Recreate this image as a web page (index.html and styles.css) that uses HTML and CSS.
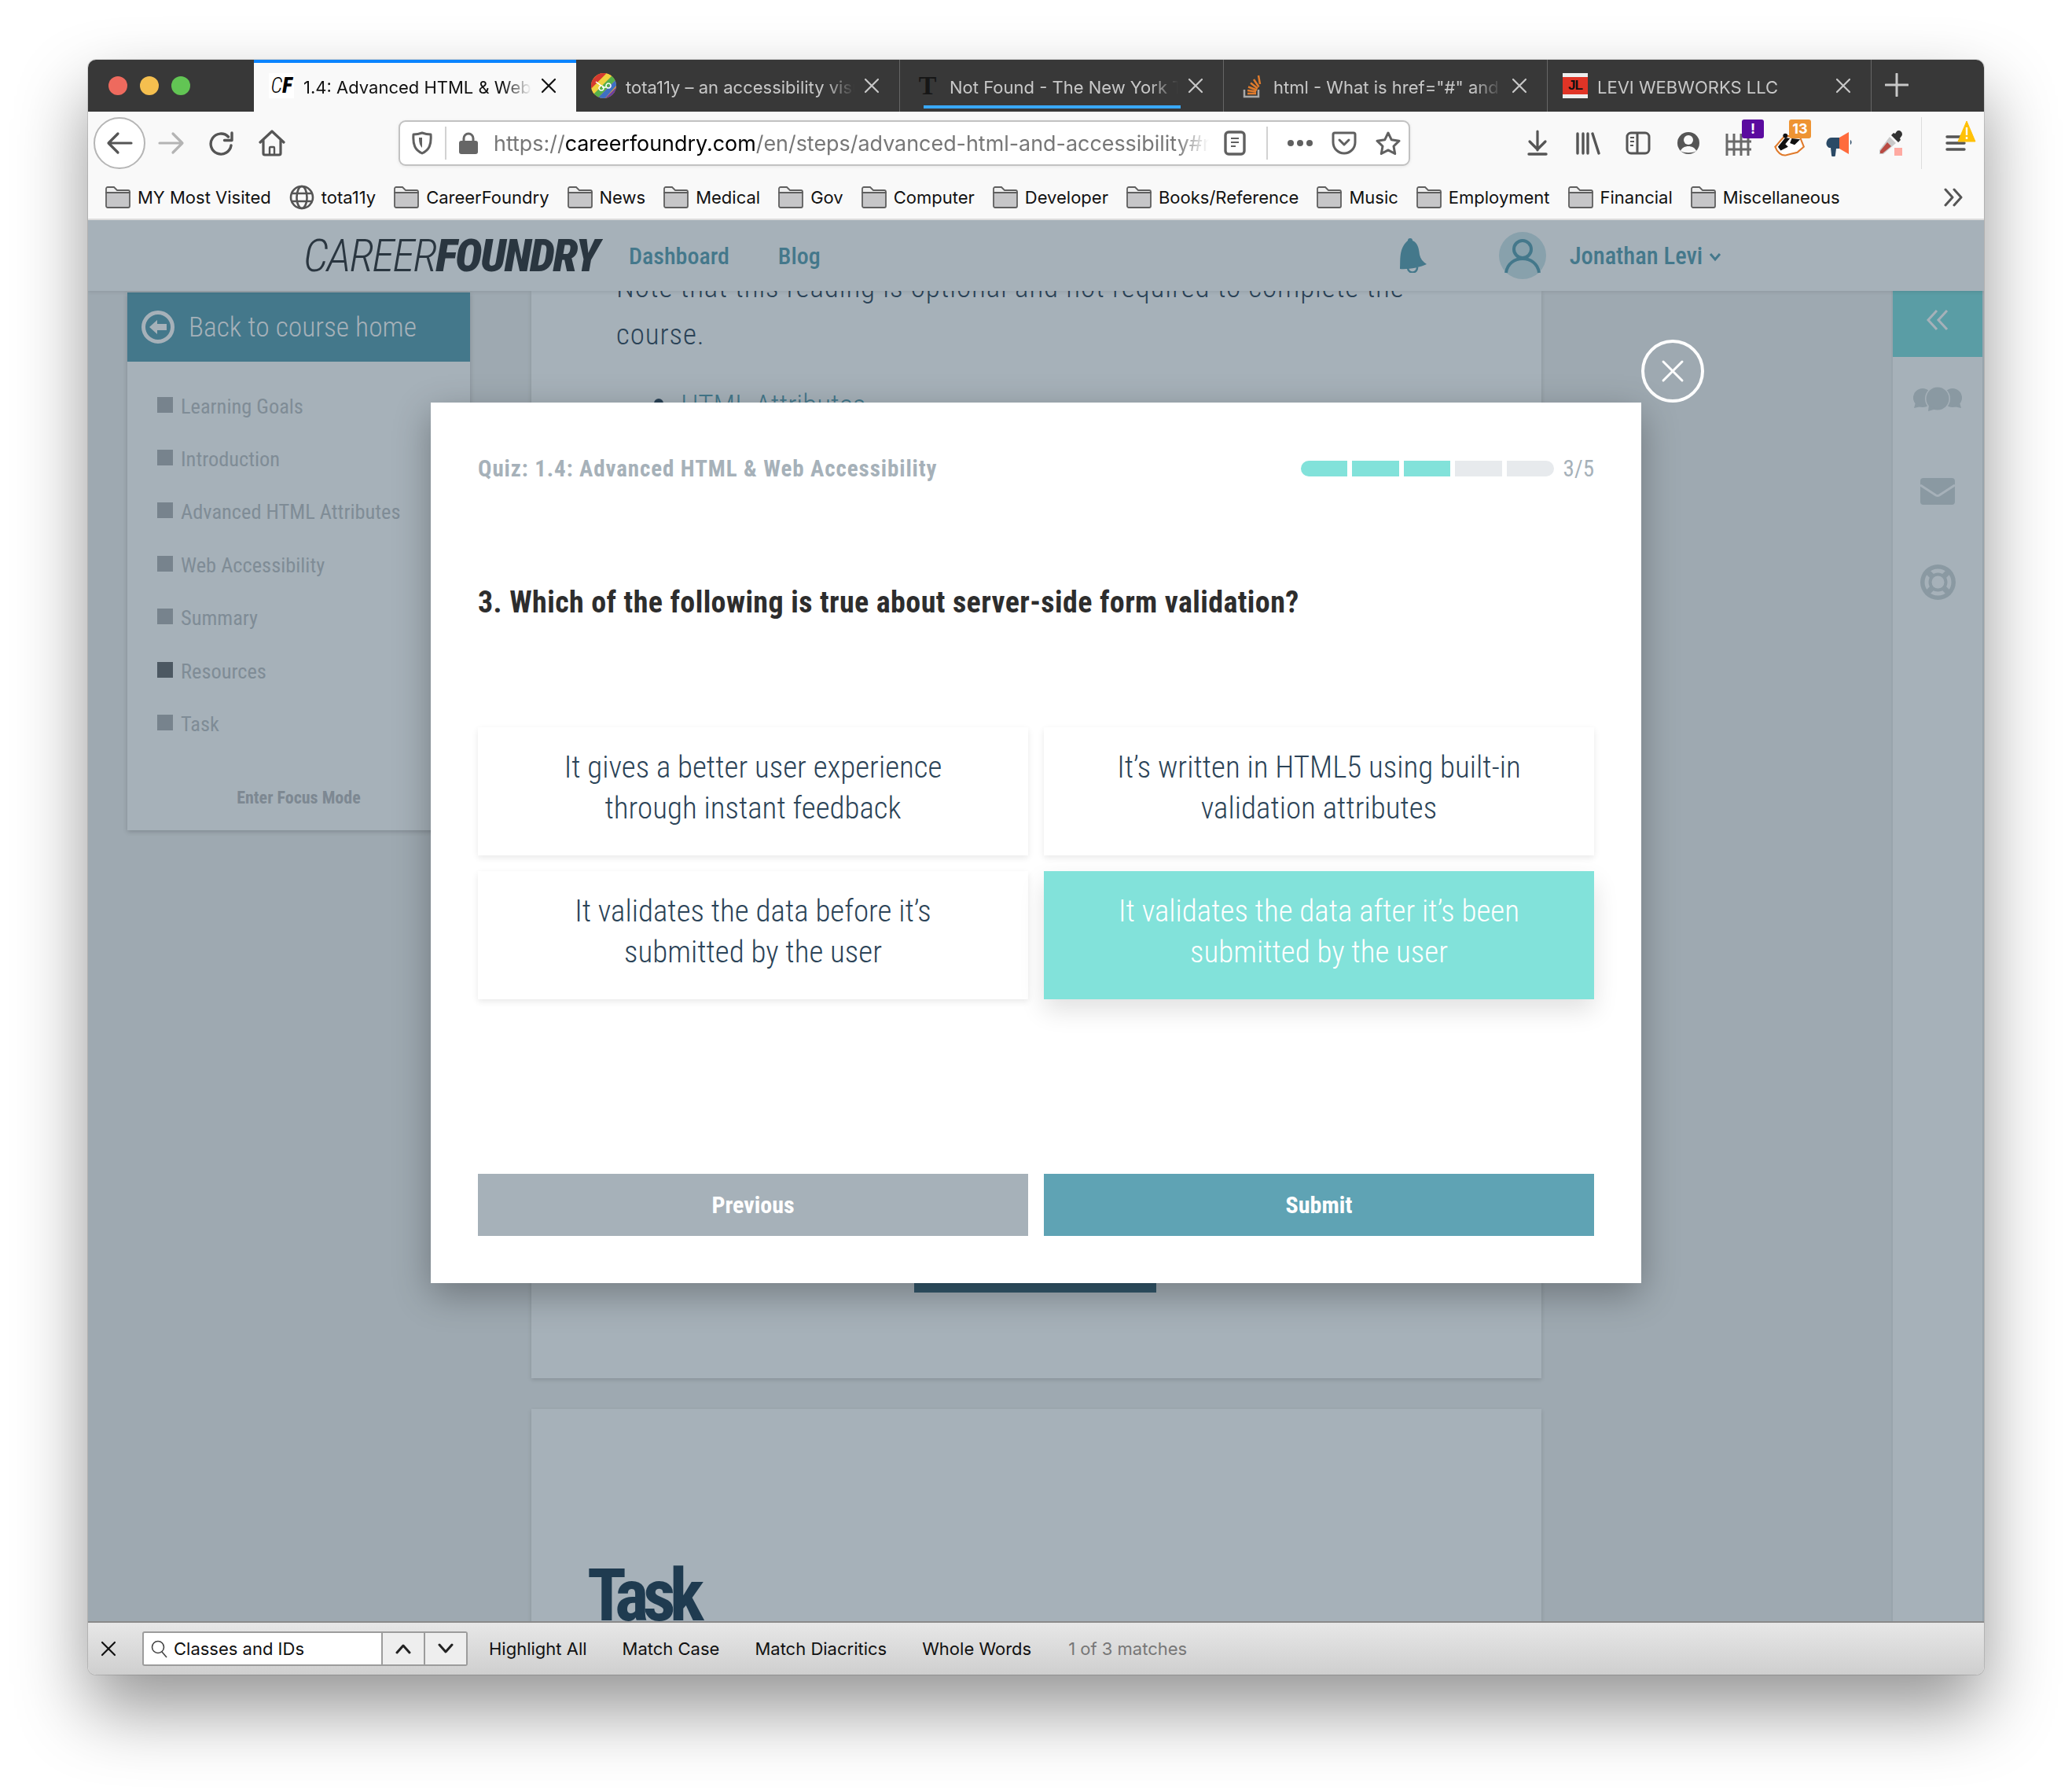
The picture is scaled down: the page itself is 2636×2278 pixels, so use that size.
FILE: index.html
```html
<!DOCTYPE html>
<html lang="en">
<head>
  <meta charset="UTF-8">
  <meta name="viewport" content="width=device-width, initial-scale=1.0">
  <title>1.4: Advanced HTML &amp; Web Accessibility</title>
  <link rel="stylesheet" href="styles.css">
</head>
<body>
  <svg class="sprite" width="0" height="0">
    <symbol id="i-folder" viewBox="0 0 32 28">
      <path d="M1 8V3a2 2 0 0 1 2-2h8l4 4h14a2 2 0 0 1 2 2v1z" fill="#efefef" stroke="#5f5f5f" stroke-width="1.800"/>
      <path d="M1 8h30v17a2 2 0 0 1-2 2H3a2 2 0 0 1-2-2z" fill="#c6c6c8" stroke="#5f5f5f" stroke-width="1.800"/>
    </symbol>
    <symbol id="i-x" viewBox="0 0 20 20">
      <path d="M2 2l16 16M18 2L2 18" fill="none" stroke="currentColor" stroke-width="2.200" stroke-linecap="round"/>
    </symbol>
  </svg>

  <div class="window">
    <div class="tabstrip">
      <div class="lights">
        <span class="light light-red"></span>
        <span class="light light-yellow"></span>
        <span class="light light-green"></span>
      </div>

      <div class="tab tab-active">
        <span class="favicon fav-cf"><i>C</i>F</span>
        <span class="tab-title">1.4: Advanced HTML &amp; Web Accessibility</span>
        <svg class="tab-x"><use href="#i-x"/></svg>
      </div>
      <div class="tab">
        <svg class="favicon" viewBox="0 0 32 32">
          <clipPath id="round"><circle cx="16" cy="16" r="16"/></clipPath>
          <g clip-path="url(#round)">
            <path d="M0 0h32v32H0z" fill="#e8a23a"/>
            <path d="M-4 14L16-6l6 4L-2 22z" fill="#d5392f"/>
            <path d="M-2 22L22-2l5 5L3 27z" fill="#efd23f"/>
            <path d="M3 27L27 3l5 5L8 32z" fill="#55b04a"/>
            <path d="M8 32L32 8v8L16 34z" fill="#3f6fc4"/>
            <path d="M16 34l18-18v18z" fill="#6a3fa0"/>
          </g>
          <path d="M6 11l7 5M14 18h5M13 16a3 3 0 1 0 .1 0M22 13a3 3 0 1 0 .1 0" fill="none" stroke="#fff" stroke-width="1.500"/>
        </svg>
        <span class="tab-title">tota11y – an accessibility visualization toolkit</span>
        <svg class="tab-x"><use href="#i-x"/></svg>
      </div>
      <div class="tab">
        <span class="favicon fav-nyt">T</span>
        <span class="tab-title">Not Found - The New York Times</span>
        <svg class="tab-x"><use href="#i-x"/></svg>
        <span class="tab-loading"></span>
      </div>
      <div class="tab">
        <svg class="favicon" viewBox="0 0 32 32">
          <path d="M7 21v9h18v-9" fill="none" stroke="#a8a8a8" stroke-width="2.500"/>
          <path d="M11 26h11M11 22l11 1.500M12 17.500l11 4M15 12.500l9 7M19 8l6.500 9.500M25 3l2 11" fill="none" stroke="#e07b2c" stroke-width="2.500"/>
        </svg>
        <span class="tab-title">html - What is href="#" and why is it used?</span>
        <svg class="tab-x"><use href="#i-x"/></svg>
      </div>
      <div class="tab">
        <span class="favicon fav-jl">JL</span>
        <span class="tab-title">LEVI WEBWORKS LLC</span>
        <svg class="tab-x"><use href="#i-x"/></svg>
      </div>
      <svg class="new-tab" viewBox="0 0 30 30"><path d="M15 1v28M1 15h28" stroke="#c8c8c8" stroke-width="3" stroke-linecap="round"/></svg>
    </div>

    <div class="toolbar">
      <div class="back-btn">
        <svg class="icon" viewBox="0 0 34 34"><path d="M32 17H4M15 5L3 17l12 12" fill="none" stroke="#555" stroke-width="3.200" stroke-linecap="round" stroke-linejoin="round"/></svg>
      </div>
      <div class="nav-btns">
        <svg class="icon" viewBox="0 0 34 34"><path d="M2 17h28M19 5l12 12-12 12" fill="none" stroke="#b4b4b4" stroke-width="3.200" stroke-linecap="round" stroke-linejoin="round"/></svg>
        <svg class="icon" viewBox="0 0 34 34"><path d="M29 20a13 13 0 1 1-3.500-11M30 4v9.500H20.500" fill="none" stroke="#555" stroke-width="3.400" stroke-linecap="round" stroke-linejoin="round"/></svg>
        <svg class="icon" viewBox="0 0 34 34"><path d="M2 16L17 2l15 14M6 13v17a2 2 0 0 0 2 2h18a2 2 0 0 0 2-2V13" fill="none" stroke="#555" stroke-width="3.200" stroke-linecap="round" stroke-linejoin="round"/><path d="M14 31v-8a1 1 0 0 1 1-1h4a1 1 0 0 1 1 1v8" fill="none" stroke="#555" stroke-width="2.400"/></svg>
      </div>

      <div class="urlbar">
        <svg class="url-shield" viewBox="0 0 26 30"><path d="M13 2c4 1.500 7 2 11 2 1 13-2 20-11 24C4 24 1 17 2 4c4 0 7-.500 11-2z" fill="none" stroke="#606060" stroke-width="3" stroke-linejoin="round"/><path d="M13 8h-4c0 6 1 10 4 13z" fill="#606060"/></svg>
        <span class="url-sep"></span>
        <svg class="url-lock" viewBox="0 0 24 28"><path d="M6 13V8a6 6 0 0 1 12 0v5" fill="none" stroke="#666" stroke-width="3"/><rect y="11" width="24" height="17" rx="3" fill="#666"/></svg>
        <span class="url-text">https://<b>careerfoundry.com</b>/en/steps/advanced-html-and-accessibility#responsive</span>
        <svg class="url-icon" viewBox="0 0 28 32"><rect x="2" y="2" width="24" height="28" rx="4" fill="none" stroke="#606060" stroke-width="3.400"/><path d="M9 10h10M9 15h10M9 20h6" stroke="#606060" stroke-width="2.200"/></svg>
        <span class="url-sep url-sep-right"></span>
        <span class="url-dots"><i></i><i></i><i></i></span>
        <svg class="url-icon url-icon-wide" viewBox="0 0 32 30"><path d="M4 2h24a2 2 0 0 1 2 2v10a14 14 0 0 1-28 0V4a2 2 0 0 1 2-2z" fill="none" stroke="#606060" stroke-width="3"/><path d="M10 11l6 6 6-6" fill="none" stroke="#606060" stroke-width="3" stroke-linecap="round" stroke-linejoin="round"/></svg>
        <svg class="url-icon url-icon-wide" viewBox="0 0 32 30"><path d="M16 2l4.300 8.800 9.700 1.400-7 6.800 1.700 9.500-8.700-4.600-8.700 4.600L9 19l-7-6.800 9.700-1.400z" fill="none" stroke="#606060" stroke-width="3" stroke-linejoin="round"/></svg>
      </div>

      <div class="tool-icons">
        <svg class="icon" viewBox="0 0 34 34"><path d="M17 2v24M7 15l10 10 10-10" fill="none" stroke="#555" stroke-width="3.200" stroke-linecap="round" stroke-linejoin="round"/><path d="M6 31h22" stroke="#555" stroke-width="3.400" stroke-linecap="round"/></svg>
        <svg class="icon" viewBox="0 0 34 34"><path d="M4 5v25M11 5v25M17 5v25M23 5l8 25" fill="none" stroke="#555" stroke-width="3.400" stroke-linecap="round"/></svg>
        <svg class="icon" viewBox="0 0 34 34"><rect x="3" y="4" width="28" height="26" rx="5" fill="none" stroke="#555" stroke-width="3"/><path d="M16 4v26" stroke="#555" stroke-width="3"/><path d="M7 10h5M7 15h5M7 20h4" stroke="#555" stroke-width="2.200"/></svg>
        <svg class="icon" viewBox="0 0 34 34"><circle cx="17" cy="17" r="14" fill="#555"/><circle cx="17" cy="13" r="6" fill="#f9f9f9"/><path d="M7 27c3-8 17-8 20 0-4 3-16 3-20 0z" fill="#f9f9f9"/></svg>
        <span class="ext">
          <svg class="icon" viewBox="0 0 34 34"><path d="M2 5v28M11 5v28M20 5v28M29 5v28M1 15h32M1 25h32" fill="none" stroke="#6a6a6a" stroke-width="3"/></svg>
          <span class="badge badge-purple">!</span>
        </span>
        <span class="ext">
          <svg class="icon" viewBox="0 0 34 28"><path d="M2 18C6 14 9 9 13 6l16 2 4 10-7 6-12 3C9 28 4 24 2 18z" fill="#fff" stroke="#e07b2c" stroke-width="1.800"/><path d="M5 18L13 8l5 1-5 6 3 3-8 4zM20 9l9 1-6 6-5-2z" fill="#111"/><circle cx="13" cy="6" r="2.500" fill="#111"/></svg>
          <span class="badge badge-orange">13</span>
        </span>
        <svg class="icon" viewBox="0 0 34 34"><path d="M17 10L29 3v28l-12-7z" fill="#ff6b3d"/><path d="M17 10H8a7 7 0 0 0-4 13l2 0 1 9a2.500 2.500 0 0 0 5 0l1-8h4z" fill="#2b4a66"/><path d="M31 13c2 1 2 5 0 6z" fill="#2b4a66"/></svg>
        <svg class="icon" viewBox="0 0 34 34"><path d="M28 1c3 0 5 2 5 5 0 2-2 3-3 5l1 2-3 3-9-9 3-3 2 1c1-1 2-4 4-4z" fill="#333"/><path d="M17 9l8 8L9 31H4v-5z" fill="#c9c9c9"/><path d="M14 16l5 5L8 30H5v-3z" fill="#b94a42"/><path d="M23 23h10v10H23z" fill="#ffaaa2"/></svg>
      </div>
      <span class="tool-sep"></span>
      <span class="menu-btn">
        <svg class="icon" viewBox="0 0 34 34"><path d="M6 9h22M6 17h22M6 25h22" stroke="#555" stroke-width="3.400" stroke-linecap="round"/></svg>
        <svg class="menu-warn" viewBox="0 0 24 28"><path d="M12 1l11 26H1z" fill="#ffc107" stroke="#ffc107" stroke-linejoin="round"/><path d="M12 9v10M12 21v3" stroke="#fff" stroke-width="2.400"/></svg>
      </span>
    </div>

    <div class="bookmarks">
      <span class="bm"><svg class="folder"><use href="#i-folder"/></svg>MY Most Visited</span>
      <span class="bm"><svg class="globe" viewBox="0 0 32 32"><g fill="none" stroke="#555" stroke-width="2.600"><circle cx="16" cy="16" r="14"/><ellipse cx="16" cy="16" rx="6.500" ry="14"/><path d="M3 11h26M3 21h26"/></g></svg>tota11y</span>
      <span class="bm"><svg class="folder"><use href="#i-folder"/></svg>CareerFoundry</span>
      <span class="bm"><svg class="folder"><use href="#i-folder"/></svg>News</span>
      <span class="bm"><svg class="folder"><use href="#i-folder"/></svg>Medical</span>
      <span class="bm"><svg class="folder"><use href="#i-folder"/></svg>Gov</span>
      <span class="bm"><svg class="folder"><use href="#i-folder"/></svg>Computer</span>
      <span class="bm"><svg class="folder"><use href="#i-folder"/></svg>Developer</span>
      <span class="bm"><svg class="folder"><use href="#i-folder"/></svg>Books/Reference</span>
      <span class="bm"><svg class="folder"><use href="#i-folder"/></svg>Music</span>
      <span class="bm"><svg class="folder"><use href="#i-folder"/></svg>Employment</span>
      <span class="bm"><svg class="folder"><use href="#i-folder"/></svg>Financial</span>
      <span class="bm"><svg class="folder"><use href="#i-folder"/></svg>Miscellaneous</span>
      <svg class="bm-more" viewBox="0 0 26 26"><path d="M3 3l9 10-9 10M14 3l9 10-9 10" fill="none" stroke="#555" stroke-width="3" stroke-linecap="round" stroke-linejoin="round"/></svg>
    </div>

    <div class="page">
      <header class="site-header">
        <div class="logo"><span class="logo-thin">CAREER</span><span class="logo-bold">FOUNDRY</span></div>
        <a class="site-link site-link-dash">Dashboard</a>
        <a class="site-link">Blog</a>
        <svg class="bell" viewBox="0 0 40 44"><path d="M14 3a3 3 0 0 1 6 0c7 3 8 10 9 18 1 5 4 9 9 12-8 4-24 7-34 6 1-10-2-26 10-36z" fill="#44788b"/><path d="M14 38a6 6 0 0 0 12-1" fill="none" stroke="#44788b" stroke-width="2.500"/></svg>
        <div class="avatar">
          <svg viewBox="0 0 60 60"><circle cx="30" cy="22" r="11" fill="none" stroke="#44788b" stroke-width="4"/><path d="M9 52c3-24 39-24 42 0" fill="none" stroke="#44788b" stroke-width="4"/></svg>
        </div>
        <span class="user-name">Jonathan Levi</span>
        <svg class="user-caret" viewBox="0 0 16 12"><path d="M2 2l6 7 6-7" fill="none" stroke="#44788b" stroke-width="3"/></svg>
      </header>

      <div class="page-body">
        <aside class="sidebar">
          <div class="back-home">
            <svg class="back-home-icon" viewBox="0 0 42 42"><circle cx="21" cy="21" r="18.500" fill="none" stroke="#a6b1b9" stroke-width="5"/><path d="M10 21l10-9v5h12v8H20v5z" fill="#a6b1b9"/></svg>
            <span>Back to course home</span>
          </div>
          <ul class="step-list">
            <li>Learning Goals</li>
            <li>Introduction</li>
            <li>Advanced HTML Attributes</li>
            <li>Web Accessibility</li>
            <li>Summary</li>
            <li class="step-current">Resources</li>
            <li>Task</li>
          </ul>
          <div class="focus-mode">Enter Focus Mode</div>
        </aside>

        <main class="content">
          <section class="card card-reading">
            <p class="reading-note">Note that this reading is optional and not required to complete the<br>course.</p>
            <ul class="reading-links">
              <li><a>HTML Attributes</a></li>
            </ul>
            <div class="next-btn"></div>
          </section>
          <section class="card card-task">
            <h2>Task</h2>
          </section>
        </main>

        <nav class="rail">
          <div class="rail-toggle">
            <svg viewBox="0 0 28 28"><path d="M13 2L2 14l11 12M26 2L15 14l11 12" fill="none" stroke="#a6b1b9" stroke-width="3"/></svg>
          </div>
          <svg class="rail-chat" viewBox="0 0 62 32"><circle cx="12" cy="14" r="12" fill="#8a99a2"/><path d="M3 20L1 27l9-2z" fill="#8a99a2"/><circle cx="50" cy="14" r="12" fill="#8a99a2"/><path d="M59 20l2 7-9-2z" fill="#8a99a2"/><circle cx="31" cy="15" r="16" fill="#a6b1b9"/><circle cx="31" cy="15" r="14.500" fill="#8a99a2"/><path d="M20 23l-1 8 10-3z" fill="#8a99a2"/></svg>
          <svg class="rail-mail" viewBox="0 0 44 34"><rect width="44" height="34" rx="4" fill="#8a99a2"/><path d="M0 9l20 13a4 4 0 0 0 4 0L44 9" fill="none" stroke="#a6b1b9" stroke-width="3"/></svg>
          <svg class="rail-buoy" viewBox="0 0 45 45"><circle cx="22.500" cy="22.500" r="22.500" fill="#8a99a2"/><circle cx="22.500" cy="22.500" r="14.500" fill="none" stroke="#a6b1b9" stroke-width="5"/><circle cx="22.500" cy="22.500" r="8" fill="#a6b1b9"/><path d="M15 15L9.500 9.500M30 15l5.500-5.500M15 30l-5.500 5.500M30 30l5.500 5.500" stroke="#8a99a2" stroke-width="7"/></svg>
        </nav>
      </div>

      <div class="quiz-close">
        <svg viewBox="0 0 30 30"><path d="M3 3l24 24M27 3L3 27" stroke="#fff" stroke-width="3" stroke-linecap="round"/></svg>
      </div>

      <div class="quiz">
        <div class="quiz-head">
          <span class="quiz-title">Quiz: 1.4: Advanced HTML &amp; Web Accessibility</span>
          <div class="quiz-progress">
            <div class="progress-bar">
              <span class="seg seg-done"></span>
              <span class="seg seg-done"></span>
              <span class="seg seg-done"></span>
              <span class="seg"></span>
              <span class="seg"></span>
            </div>
            <span class="progress-count">3/5</span>
          </div>
        </div>
        <h3 class="question">3. Which of the following is true about server-side form validation?</h3>
        <div class="options">
          <div class="option">It gives a better user experience<br>through instant feedback</div>
          <div class="option">It’s written in HTML5 using built-in<br>validation attributes</div>
          <div class="option">It validates the data before it’s<br>submitted by the user</div>
          <div class="option option-selected">It validates the data after it’s been<br>submitted by the user</div>
        </div>
        <div class="quiz-actions">
          <button class="btn btn-prev">Previous</button>
          <button class="btn btn-submit">Submit</button>
        </div>
      </div>
    </div>

    <div class="findbar">
      <svg class="find-close"><use href="#i-x"/></svg>
      <div class="find-box">
        <div class="find-input">
          <svg viewBox="0 0 24 24"><circle cx="10" cy="10" r="7.500" fill="none" stroke="#444" stroke-width="1.600"/><path d="M15 16l6 7" stroke="#444" stroke-width="1.600"/></svg>
          Classes and IDs
        </div>
        <div class="find-arrow"><svg viewBox="0 0 20 14"><path d="M2 12l8-9 8 9" fill="none" stroke="#222" stroke-width="3" stroke-linecap="round" stroke-linejoin="round"/></svg></div>
        <div class="find-arrow"><svg viewBox="0 0 20 14"><path d="M2 2l8 9 8-9" fill="none" stroke="#222" stroke-width="3" stroke-linecap="round" stroke-linejoin="round"/></svg></div>
      </div>
      <span class="find-opt">Highlight All</span>
      <span class="find-opt">Match Case</span>
      <span class="find-opt">Match Diacritics</span>
      <span class="find-opt">Whole Words</span>
      <span class="find-count">1 of 3 matches</span>
    </div>
  </div>
</body>
</html>
```

FILE: styles.css
```css
* {
  box-sizing: border-box;
}
body {
  margin: 0;
  padding: 76px 112px 0;
  height: 2278px;
  overflow: hidden;
  background-color: #fff;
  font-family: Inter, "Liberation Sans", sans-serif;
}
.sprite {
  position: absolute;
}

/* browser window */
.window {
  width: 2412px;
  height: 2054px;
  display: flex;
  flex-direction: column;
  border-radius: 10px;
  overflow: hidden;
  box-shadow: 0 0 0 1px rgba(0, 0, 0, 0.12), 0 44px 90px rgba(0, 0, 0, 0.42);
}
.tabstrip {
  flex: 0 0 66px;
  display: flex;
  background-color: #383838;
  font-size: 22px;
}
.lights {
  flex: 0 0 211px;
  display: flex;
  align-items: center;
  gap: 16px;
  padding-left: 26px;
}
.light {
  width: 24px;
  height: 24px;
  border-radius: 50%;
}
.light-red { background-color: #ee6a5e; }
.light-yellow { background-color: #f5bf4f; }
.light-green { background-color: #62c554; }

.tab {
  position: relative;
  flex: 0 0 412px;
  min-width: 0;
  display: flex;
  align-items: center;
  padding: 0 25px 0 19px;
  color: #c8c8c8;
  border-right: 1px solid #666;
}
.tab-active {
  flex-basis: 410px;
  background-color: #f9f9f9;
  color: #111;
  border-right: 0;
  border-top: 4px solid #0a84ff;
  padding-bottom: 4px;
}
.favicon {
  flex: 0 0 32px;
  width: 32px;
  height: 32px;
}
.fav-cf {
  background-color: #fff;
  color: #000;
  font: italic 900 27px/32px Roboto, sans-serif;
  font-stretch: 75%;
  text-align: center;
}
.fav-cf i {
  font-weight: 300;
}
.fav-nyt {
  color: #161616;
  font: bold 34px/32px "Liberation Serif", serif;
  text-align: center;
}
.fav-jl {
  background-color: #e03426;
  border-top: 5px solid #eee;
  border-bottom: 5px solid #eee;
  color: #111;
  font: bold 17px/22px "Liberation Sans", sans-serif;
  letter-spacing: -1px;
  text-align: center;
}
.tab-title {
  flex: 1;
  min-width: 0;
  margin: 3px 12px 0;
  white-space: nowrap;
  overflow: hidden;
  -webkit-mask-image: linear-gradient(to left, transparent 0, #000 36px);
  mask-image: linear-gradient(to left, transparent 0, #000 36px);
}
.tab-x {
  flex: 0 0 20px;
  width: 20px;
  height: 20px;
}
.tab-loading {
  position: absolute;
  left: 30px;
  bottom: 4px;
  width: 327px;
  height: 4px;
  background-color: #39a9ff;
}
.new-tab {
  width: 30px;
  height: 30px;
  margin: 17px 0 0 17px;
}

/* toolbar */
.toolbar {
  flex: 0 0 80px;
  display: flex;
  align-items: center;
  padding-left: 7px;
  background-color: #f9f9f9;
}
.icon {
  flex: 0 0 40px;
  width: 40px;
  height: 34px;
}
.back-btn {
  flex: 0 0 66px;
  height: 66px;
  display: flex;
  align-items: center;
  justify-content: center;
  background-color: #fff;
  border: 2px solid #b5b5b5;
  border-radius: 50%;
}
.nav-btns {
  display: flex;
  gap: 24px;
  margin-left: 13px;
}
.urlbar {
  flex: 0 0 1287px;
  min-width: 0;
  height: 58px;
  margin-left: 141px;
  display: flex;
  align-items: center;
  background-color: #fff;
  border: 2px solid #c2c2c2;
  border-radius: 9px;
  padding: 0 10px 0 15px;
  box-shadow: 0 1px 4px rgba(0, 0, 0, 0.08);
}
.url-shield {
  flex: 0 0 26px;
  height: 30px;
}
.url-sep {
  flex: 0 0 2px;
  height: 42px;
  margin: 0 16px;
  background-color: #d2d2d2;
}
.url-lock {
  flex: 0 0 24px;
  height: 28px;
}
.url-text {
  flex: 1;
  min-width: 0;
  margin: 0 19px 0 20px;
  font-size: 26.900px;
  line-height: 36px;
  color: #777;
  white-space: nowrap;
  overflow: hidden;
  -webkit-mask-image: linear-gradient(to left, transparent 0, #000 40px);
  mask-image: linear-gradient(to left, transparent 0, #000 40px);
}
.url-text b {
  font-weight: normal;
  color: #000;
}
.url-icon {
  flex: 0 0 28px;
  height: 32px;
}
.url-icon-wide {
  flex-basis: 32px;
}
.url-icon-wide + .url-icon-wide {
  margin-left: 24px;
}
.url-sep-right {
  margin: 0 25px 0 26px;
}
.url-dots {
  display: flex;
  gap: 4px;
  margin-right: 24px;
}
.url-dots i {
  width: 8px;
  height: 8px;
  background-color: #606060;
  border-radius: 50%;
}
.tool-icons {
  display: flex;
  gap: 24px;
  margin-left: 142px;
}
.ext {
  position: relative;
  display: flex;
}
.badge {
  position: absolute;
  top: -13px;
  right: -12px;
  min-width: 28px;
  height: 24px;
  border-radius: 3px;
  color: #fff;
  font-size: 18px;
  font-weight: 700;
  line-height: 24px;
  text-align: center;
}
.badge-purple { background-color: #5b0b9f; }
.badge-orange { background-color: #ee9433; right: -8px; }
.tool-sep {
  width: 1px;
  height: 66px;
  margin-left: 20px;
  background-color: #ddd;
}
.menu-btn {
  position: relative;
  display: flex;
  margin-left: 23px;
}
.menu-warn {
  position: absolute;
  top: -12px;
  right: -6px;
  width: 24px;
  height: 28px;
}

/* bookmarks */
.bookmarks {
  flex: 0 0 58px;
  display: flex;
  align-items: center;
  padding: 2px 26px 0 22px;
  gap: 23px;
  background-color: #f9f9f9;
  border-bottom: 2px solid #dcdcdc;
  font-size: 22px;
  color: #111;
}
.bm {
  display: flex;
  align-items: center;
  gap: 9px;
  white-space: nowrap;
}
.folder {
  width: 32px;
  height: 28px;
}
.globe {
  width: 32px;
  height: 32px;
}
.bm-more {
  width: 26px;
  height: 26px;
  margin-left: auto;
}

/* page behind the quiz */
.page {
  position: relative;
  flex: 1;
  min-height: 0;
  display: flex;
  flex-direction: column;
  overflow: hidden;
  background-color: #9ea9b1;
  font-family: Roboto, "Liberation Sans", sans-serif;
  font-stretch: 75%;
}
.site-header {
  position: relative;
  z-index: 2;
  flex: 0 0 90px;
  display: flex;
  align-items: center;
  padding-left: 274px;
  background-color: #a6b1b9;
  box-shadow: 0 2px 4px rgba(0, 0, 0, 0.08);
}
.logo {
  flex: 0 0 414px;
  font-size: 58px;
  font-style: italic;
  letter-spacing: -2px;
  color: #2a3640;
  white-space: nowrap;
}
.logo-thin {
  font-weight: 300;
}
.logo-bold {
  font-weight: 900;
}
.site-link {
  font-size: 30px;
  font-weight: 500;
  color: #44788b;
}
.site-link-dash {
  margin-right: 62px;
}
.bell {
  width: 40px;
  height: 44px;
  margin-left: 733px;
}
.avatar {
  width: 60px;
  height: 60px;
  margin-left: 90px;
  border-radius: 50%;
  background-color: #88a1ac;
}
.user-name {
  margin-left: 30px;
  font-size: 30.500px;
  font-weight: 500;
  color: #44788b;
}
.user-caret {
  width: 16px;
  height: 12px;
  margin: 4px 0 0 8px;
}
.page-body {
  flex: 1;
  min-height: 0;
  display: flex;
}

/* left sidebar */
.sidebar {
  flex: 0 0 436px;
  height: 684px;
  margin: 2px 0 0 50px;
  background-color: #a6b1b9;
  box-shadow: 0 2px 6px rgba(0, 0, 0, 0.18);
}
.back-home {
  height: 88px;
  display: flex;
  align-items: center;
  gap: 18px;
  padding-left: 18px;
  background-color: #44788b;
  color: #a6b1b9;
  font-size: 35.500px;
  font-weight: 300;
}
.back-home-icon {
  width: 42px;
  height: 42px;
}
.step-list {
  list-style-type: none;
  margin: 0;
  padding: 23px 0 0 38px;
}
.step-list li {
  height: 67.400px;
  display: flex;
  align-items: center;
  gap: 10px;
  color: #7f8c96;
  font-size: 26.400px;
}
.step-list li::before {
  content: "";
  width: 20px;
  height: 20px;
  margin-top: -4px;
  background-color: #77838d;
}
.step-list li.step-current::before {
  background-color: #4c5862;
}
.focus-mode {
  margin-top: 47px;
  text-align: center;
  color: #7d8892;
  font-size: 22px;
  font-weight: 700;
}

/* reading column */
.content {
  flex: 0 0 1285px;
  margin-left: 78px;
}
.card {
  background-color: #a6b1b9;
  box-shadow: 0 2px 5px rgba(0, 0, 0, 0.14);
  overflow: hidden;
  color: #2b4357;
}
.card-reading {
  height: 1383px;
  padding: 0 108px;
}
.reading-note {
  margin: -34px 0 0;
  font-size: 37px;
  font-weight: 300;
  font-stretch: 86%;
  letter-spacing: 0.9px;
  line-height: 60px;
}
.reading-links {
  list-style-type: none;
  margin: 30px 0 0;
  padding-left: 48px;
  font-size: 37px;
  font-weight: 300;
  font-stretch: 78%;
  line-height: 60px;
}
.reading-links li {
  display: flex;
  gap: 22px;
}
.reading-links li::before {
  content: "";
  flex: 0 0 12px;
  height: 12px;
  margin-top: 21px;
  border-radius: 50%;
  background-color: #2b4357;
}
.reading-links a {
  color: #44788b;
}
.next-btn {
  width: 308px;
  height: 90px;
  margin: 1008px 0 0 379px;
  background-color: #33586c;
}
.card-task {
  height: 400px;
  margin-top: 39px;
  padding: 183px 71px 0;
}
.card-task h2 {
  margin: 0;
  font-size: 92px;
  line-height: 110px;
  letter-spacing: -7.500px;
  color: #1f3b50;
}

/* right rail */
.rail {
  flex: 0 0 118px;
  margin-left: auto;
  display: flex;
  flex-direction: column;
  align-items: center;
  background-color: #a6b1b9;
  border-left: 2px solid #98a4ac;
  border-right: 2px solid #98a4ac;
}
.rail-toggle {
  align-self: stretch;
  height: 84px;
  display: flex;
  align-items: center;
  justify-content: center;
  padding-bottom: 10px;
  background-color: #5a9da5;
}
.rail-toggle svg {
  width: 28px;
  height: 28px;
}
.rail-chat {
  width: 62px;
  height: 32px;
  margin-top: 38px;
}
.rail-mail {
  width: 44px;
  height: 34px;
  margin-top: 84px;
}
.rail-buoy {
  width: 45px;
  height: 45px;
  margin-top: 76px;
}

/* quiz modal */
.quiz-close {
  position: absolute;
  z-index: 3;
  left: 1976px;
  top: 152px;
  width: 80px;
  height: 80px;
  display: flex;
  align-items: center;
  justify-content: center;
  border: 4px solid #fff;
  border-radius: 50%;
}
.quiz-close svg {
  width: 30px;
  height: 30px;
}
.quiz {
  position: absolute;
  z-index: 3;
  left: 436px;
  top: 232px;
  width: 1540px;
  height: 1120px;
  display: flex;
  flex-direction: column;
  padding: 60px;
  background-color: #fff;
  box-shadow: 0 14px 44px rgba(0, 0, 0, 0.3);
}
.quiz-head {
  height: 48px;
  display: flex;
  align-items: center;
  justify-content: space-between;
  color: #a6b1b9;
  font-size: 29px;
  font-weight: 700;
}
.quiz-title {
  letter-spacing: 0.9px;
}
.quiz-progress {
  display: flex;
  align-items: center;
  gap: 12px;
}
.progress-bar {
  width: 322px;
  height: 20px;
  display: flex;
  gap: 6px;
  border-radius: 10px;
  overflow: hidden;
}
.seg {
  flex: 1;
  background-color: #e7eaed;
}
.seg-done {
  background-color: #82e2da;
}
.progress-count {
  font-weight: 400;
}
.question {
  margin: 118px 0 0;
  color: #2d2d2d;
  font-size: 38px;
  line-height: 56px;
  font-weight: 700;
  letter-spacing: 0.4px;
}
.options {
  margin-top: 131px;
  display: grid;
  grid-template-columns: 1fr 1fr;
  gap: 20px;
}
.option {
  height: 163px;
  padding-top: 25px;
  text-align: center;
  color: #2b4357;
  font-size: 39px;
  font-weight: 300;
  font-stretch: 79%;
  line-height: 52px;
  background-color: #fff;
  box-shadow: 0 3px 8px rgba(0, 0, 0, 0.09);
}
.option-selected {
  background-color: #82e2da;
  color: #fff;
  box-shadow: 0 14px 30px rgba(0, 0, 0, 0.12);
}
.quiz-actions {
  margin-top: auto;
  display: grid;
  grid-template-columns: 1fr 1fr;
  gap: 20px;
}
.btn {
  height: 79px;
  border: 0;
  color: #fff;
  font: 700 30px Roboto, "Liberation Sans", sans-serif;
  font-stretch: 75%;
}
.btn-prev {
  background-color: #a6b1b9;
}
.btn-submit {
  background-color: #5fa3b4;
}

/* find bar */
.findbar {
  flex: 0 0 68px;
  display: flex;
  align-items: center;
  padding-left: 16px;
  background: linear-gradient(#e7e7e7, #cfcfcf);
  border-top: 2px solid #8a8a8a;
  font-size: 22px;
  color: #111;
}
.find-close {
  width: 20px;
  height: 20px;
}
.find-box {
  width: 414px;
  height: 44px;
  margin: 0 27px 0 33px;
  display: flex;
  background-color: #fff;
  border: 2px solid #9c9c9c;
  border-radius: 3px;
}
.find-input {
  flex: 1;
  display: flex;
  align-items: center;
  gap: 6px;
  padding-left: 8px;
}
.find-input svg {
  width: 24px;
  height: 24px;
}
.find-arrow {
  flex: 0 0 54px;
  display: flex;
  align-items: center;
  justify-content: center;
  background-color: #eee;
  border-left: 2px solid #9c9c9c;
}
.find-arrow svg {
  width: 20px;
  height: 14px;
}
.find-opt {
  margin-right: 45px;
}
.find-count {
  color: #777;
  margin-left: 2px;
}
```
